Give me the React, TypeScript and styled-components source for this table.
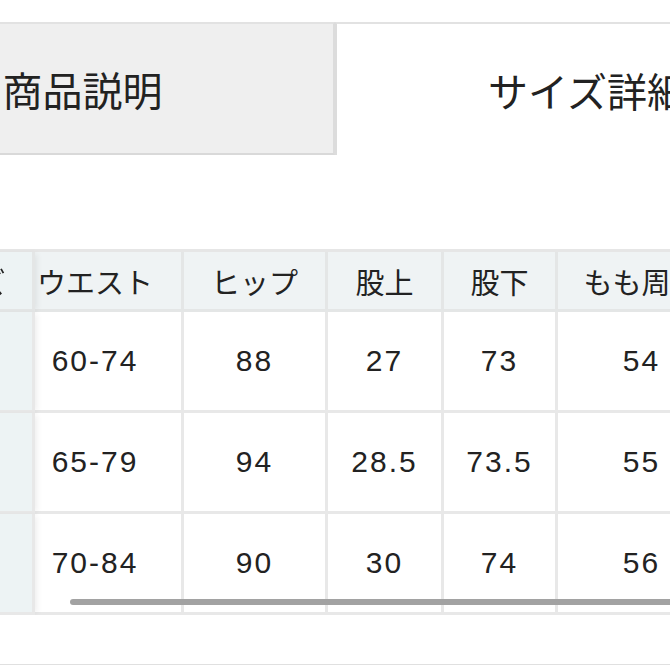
import React from "react";
import styled, { createGlobalStyle } from "styled-components";

const sizeRows = [
  { size: "S", waist: "60-74", hip: "88", rise: "27", inseam: "73", thigh: "54", hem: "18" },
  { size: "M", waist: "65-79", hip: "94", rise: "28.5", inseam: "73.5", thigh: "55", hem: "19" },
  { size: "L", waist: "70-84", hip: "90", rise: "30", inseam: "74", thigh: "56", hem: "20" },
];

const columns = [
  { key: "waist", label: "ウエスト", width: 175 },
  { key: "hip", label: "ヒップ", width: 144 },
  { key: "rise", label: "股上", width: 116 },
  { key: "inseam", label: "股下", width: 114 },
  { key: "thigh", label: "もも周り", width: 170 },
  { key: "hem", label: "裾幅", width: 150 },
] as const;

const GlobalStyle = createGlobalStyle`
  body {
    margin: 0;
    background: #fff;
    font-family: "Liberation Sans", "Noto Sans CJK JP", sans-serif;
    color: #222;
  }
`;

const Page = styled.div`
  width: 670px;
  height: 670px;
  overflow: hidden;
  box-sizing: border-box;
  padding-top: 22px;
  background: #fff;
`;

const TabBar = styled.div`
  display: flex;
  height: 133px;
  margin-left: -168px;
`;

const Tab = styled.div<{ $active?: boolean }>`
  flex: 0 0 503px;
  box-sizing: border-box;
  display: flex;
  align-items: center;
  justify-content: center;
  font-family: "Noto Sans CJK JP", sans-serif;
  font-size: 40px;
  color: #222;
  border-top: 2px solid #e2e2e2;
  background: ${(p) => (p.$active ? "#fff" : "#efefef")};
  border-left: ${(p) => (p.$active ? "2px solid #dcdcdc" : "none")};
  border-right: ${(p) => (p.$active ? "none" : "2px solid #dcdcdc")};
  border-bottom: ${(p) => (p.$active ? "none" : "2px solid #d9d9d9")};
`;

const TableSection = styled.div`
  position: relative;
  margin-top: 94px;
`;

const Scroller = styled.div`
  margin-left: -107px;
  overflow-x: auto;
  overflow-y: hidden;
  scrollbar-width: none;
  &::-webkit-scrollbar {
    display: none;
  }
`;

const SizeTable = styled.table<{ $width: number }>`
  width: ${(p) => p.$width}px;
  table-layout: fixed;
  border-collapse: separate;
  border-spacing: 0;
  border-top: 3px solid #e6e6e6;
`;

const HeadCell = styled.th<{ $w: number }>`
  width: ${(p) => p.$w}px;
  height: 60px;
  box-sizing: border-box;
  padding: 0;
  background: #eff3f4;
  border-right: 3px solid #e4e6e6;
  border-bottom: 3px solid #e4e6e6;
  font-family: "Noto Sans CJK JP", sans-serif;
  font-weight: 400;
  font-size: 29px;
  text-align: center;
  white-space: nowrap;
  color: #222;
`;

const DataCell = styled.td`
  height: 98px;
  padding: 0;
  background: #fff;
  border-right: 3px solid #e8e8e8;
  border-bottom: 3px solid #e8e8e8;
  font-size: 30px;
  letter-spacing: 2px;
  text-align: center;
  color: #222;
`;

const StickyHead = styled(HeadCell)`
  position: sticky;
  left: 0;
  z-index: 1;
  background: #edf3f4;
  box-shadow: 4px 0 6px -2px rgba(0, 0, 0, 0.07);
`;

const StickyCell = styled(DataCell)`
  position: sticky;
  left: 0;
  z-index: 1;
  background: #edf3f4;
  box-shadow: 4px 0 6px -2px rgba(0, 0, 0, 0.07);
`;

const ScrollThumb = styled.div`
  position: absolute;
  left: 70px;
  right: -40px;
  bottom: 10px;
  height: 6px;
  border-radius: 3px;
  background: #a2a2a2;
  z-index: 2;
`;

const Divider = styled.div`
  margin-top: 49px;
  height: 1px;
  background: #e0e0e0;
`;

const STICKY_WIDTH = 142;

export default function App() {
  const tableWidth = STICKY_WIDTH + columns.reduce((sum, c) => sum + c.width, 0);

  return (
    <Page>
      <GlobalStyle />
      <TabBar>
        <Tab>商品説明</Tab>
        <Tab $active>サイズ詳細</Tab>
      </TabBar>

      <TableSection>
        <Scroller
          ref={(el) => {
            if (el) el.scrollLeft = 26;
          }}
        >
          <SizeTable $width={tableWidth}>
            <thead>
              <tr>
                <StickyHead $w={STICKY_WIDTH}>サイズ</StickyHead>
                {columns.map((c) => (
                  <HeadCell key={c.key} $w={c.width}>
                    {c.label}
                  </HeadCell>
                ))}
              </tr>
            </thead>
            <tbody>
              {sizeRows.map((row) => (
                <tr key={row.size}>
                  <StickyCell>{row.size}</StickyCell>
                  {columns.map((c) => (
                    <DataCell key={c.key}>{row[c.key]}</DataCell>
                  ))}
                </tr>
              ))}
            </tbody>
          </SizeTable>
        </Scroller>
        <ScrollThumb />
      </TableSection>

      <Divider />
    </Page>
  );
}
